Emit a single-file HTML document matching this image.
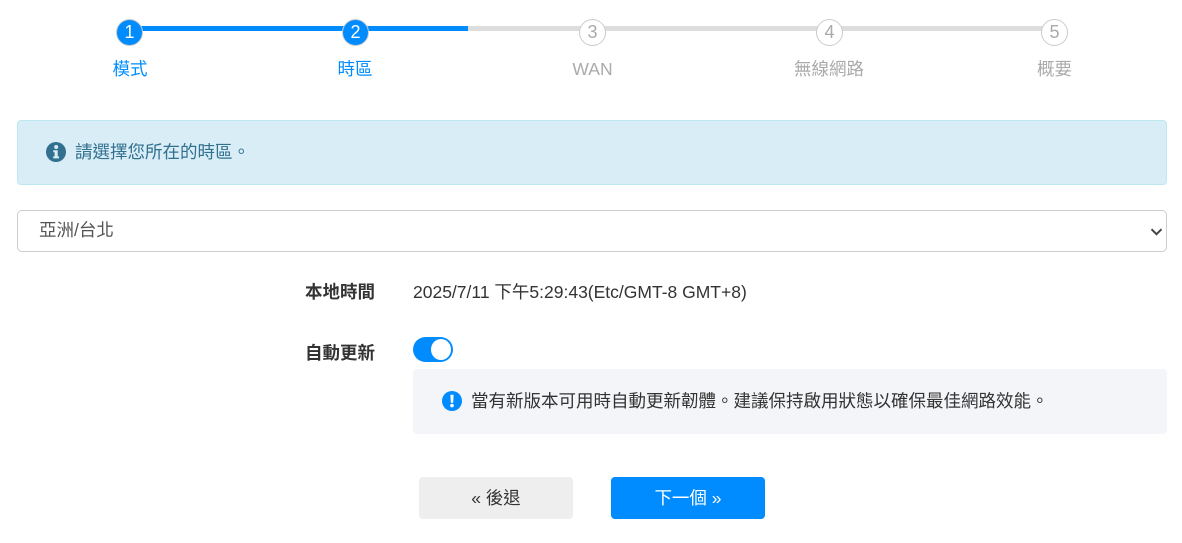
<!DOCTYPE html>
<html lang="zh-TW"><head><meta charset="utf-8"><title>時區</title>
<style>
html,body{margin:0;padding:0;background:#fff}
body{width:1182px;height:543px;position:relative;overflow:hidden;font-family:"Liberation Sans","Noto Sans CJK TC",sans-serif;font-size:17.5px;color:#333}
.a{position:absolute;white-space:nowrap}
.line{position:absolute;height:5px;top:26px}
.c{position:absolute;top:19px;width:25px;height:25px;border:1px solid #ccc;border-radius:50%;background:#fff;color:#aaa;text-align:center;line-height:25px;font-size:18px;box-sizing:content-box}
.c.on{background:#008cff;color:#fff}
.l{position:absolute;top:57px;width:120px;text-align:center;font-size:17.5px;line-height:24px;color:#aaa}
.l.on{color:#008cff}
.btn{position:absolute;top:477px;width:154px;height:42px;border-radius:4px;text-align:center;line-height:42px;font-size:17.5px}
</style></head><body>
<div class="line" style="left:130px;width:338px;background:#008cff"></div>
<div class="line" style="left:468px;width:586px;background:#ddd"></div>
<div class="c on" style="left:116px">1</div>
<div class="c on" style="left:342px">2</div>
<div class="c" style="left:579px">3</div>
<div class="c" style="left:816px">4</div>
<div class="c" style="left:1041px">5</div>
<div class="l on" style="left:70px">模式</div>
<div class="l on" style="left:295px">時區</div>
<div class="l" style="left:532.5px">WAN</div>
<div class="l" style="left:769px">無線網路</div>
<div class="l" style="left:994.5px">概要</div>

<div class="a" style="left:17px;top:120px;width:1150px;height:65px;box-sizing:border-box;background:#d9edf7;border:1px solid #bce8f1;border-radius:4px"></div>
<svg class="a" style="left:46px;top:142px" width="20" height="20" viewBox="0 0 20 20"><circle cx="10" cy="10" r="10" fill="#31708f"/><circle cx="10.2" cy="5" r="2" fill="#d9edf7"/><path d="M7.3 8.2h4.4v6.2h1.3v2H7.2v-2h1.4v-4.2H7.3z" fill="#d9edf7"/></svg>
<div class="a" style="left:75px;top:141px;line-height:22px;font-size:17.5px;color:#31708f">請選擇您所在的時區。</div>

<div class="a" style="left:17px;top:210px;width:1150px;height:42px;box-sizing:border-box;background:#fff;border:1px solid #ccc;border-radius:5px"></div>
<div class="a" style="left:39px;top:219px;line-height:23px;font-size:17.5px;color:#555">亞洲/台北</div>
<svg class="a" style="left:1150px;top:227px" width="14" height="10" viewBox="0 0 14 10"><path d="M1.5 2.2L6.5 7.2l5-5" fill="none" stroke="#444" stroke-width="2"/></svg>

<div class="a" style="left:175px;width:200px;text-align:right;top:281px;line-height:23px;font-weight:bold;font-size:17.5px">本地時間</div>
<div class="a" style="left:413px;top:281px;line-height:23px;font-size:17.5px">2025/7/11 下午5:29:43(Etc/GMT-8 GMT+8)</div>
<div class="a" style="left:175px;width:200px;text-align:right;top:342px;line-height:23px;font-weight:bold;font-size:17.5px">自動更新</div>

<div class="a" style="left:413px;top:337px;width:40px;height:25px;border-radius:13px;background:#008cff"></div>
<div class="a" style="left:431px;top:339px;width:20px;height:20.5px;border-radius:50%;background:#fff"></div>

<div class="a" style="left:413px;top:369px;width:754px;height:65px;background:#f4f5f9;border-radius:4px"></div>
<svg class="a" style="left:442px;top:391px" width="20" height="20" viewBox="0 0 20 20"><circle cx="10" cy="10" r="10" fill="#008cff"/><path d="M8.4 3.8h3.2l-.4 8h-2.4z" fill="#fff"/><circle cx="10" cy="14.6" r="1.8" fill="#fff"/></svg>
<div class="a" style="left:471px;top:390px;line-height:22px;font-size:17.5px">當有新版本可用時自動更新韌體。建議保持啟用狀態以確保最佳網路效能。</div>

<div class="btn" style="left:419px;background:#eee;color:#333">« 後退</div>
<div class="btn" style="left:611px;background:#008cff;color:#fff">下一個 »</div>
</body></html>
